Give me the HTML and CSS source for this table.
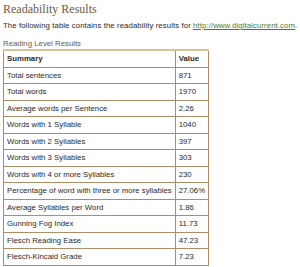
FILE: index.html
```html
<!DOCTYPE html>
<html>
<head>
<meta charset="utf-8">
<link rel="stylesheet" href="styles.css">
</head>
<body>
<div class="page">
  <h1 class="title">Readability Results</h1>
  <p class="intro">The following table contains the readability results for <a class="link" href="#">http://www.digitalcurrent.com</a>.</p>
  <div class="caption">Reading Level Results</div>
  <table class="results">
    <thead>
      <tr><th class="c1">Summary</th><th class="c2">Value</th></tr>
    </thead>
    <tbody>
      <tr><td>Total sentences</td><td>871</td></tr>
      <tr><td>Total words</td><td>1970</td></tr>
      <tr><td>Average words per Sentence</td><td>2.26</td></tr>
      <tr><td>Words with 1 Syllable</td><td>1040</td></tr>
      <tr><td>Words with 2 Syllables</td><td>397</td></tr>
      <tr><td>Words with 3 Syllables</td><td>303</td></tr>
      <tr><td>Words with 4 or more Syllables</td><td>230</td></tr>
      <tr><td>Percentage of word with three or more syllables</td><td>27.06%</td></tr>
      <tr><td>Average Syllables per Word</td><td>1.86</td></tr>
      <tr><td>Gunning Fog Index</td><td>11.73</td></tr>
      <tr><td>Flesch Reading Ease</td><td>47.23</td></tr>
      <tr><td>Flesch-Kincaid Grade</td><td>7.23</td></tr>
    </tbody>
  </table>
</div>
</body>
</html>
```
FILE: styles.css
```css
html, body { margin: 0; padding: 0; background: #fff; }
.page {
  padding: 2px 3px 0 3px;
  font-family: "Liberation Sans", Arial, sans-serif;
  font-size: 7.8px;
  color: #2a2a2a;
}
.title {
  margin: 0;
  font-family: "Liberation Serif", serif;
  font-weight: normal;
  font-size: 12px;
  line-height: 15px;
  color: #74593a;
}
.intro {
  margin: 3px 0 0 0;
  line-height: 12px;
  white-space: nowrap;
  letter-spacing: 0.08px;
}
.link { color: #4f7a1f; text-decoration: underline; }
.caption {
  margin-top: 7px;
  line-height: 10px;
  color: #6b5a3e;
}
.results {
  border-collapse: collapse;
  border: 1px solid #b08d67;
}
.results th, .results td {
  border: 1px solid #b08d67;
  padding: 0 3px;
  height: 15.5px;
  text-align: left;
  white-space: nowrap;
  color: #2a2a2a;
}
.results th { font-weight: bold; border-top: 2px solid #d9c39a; }
```
